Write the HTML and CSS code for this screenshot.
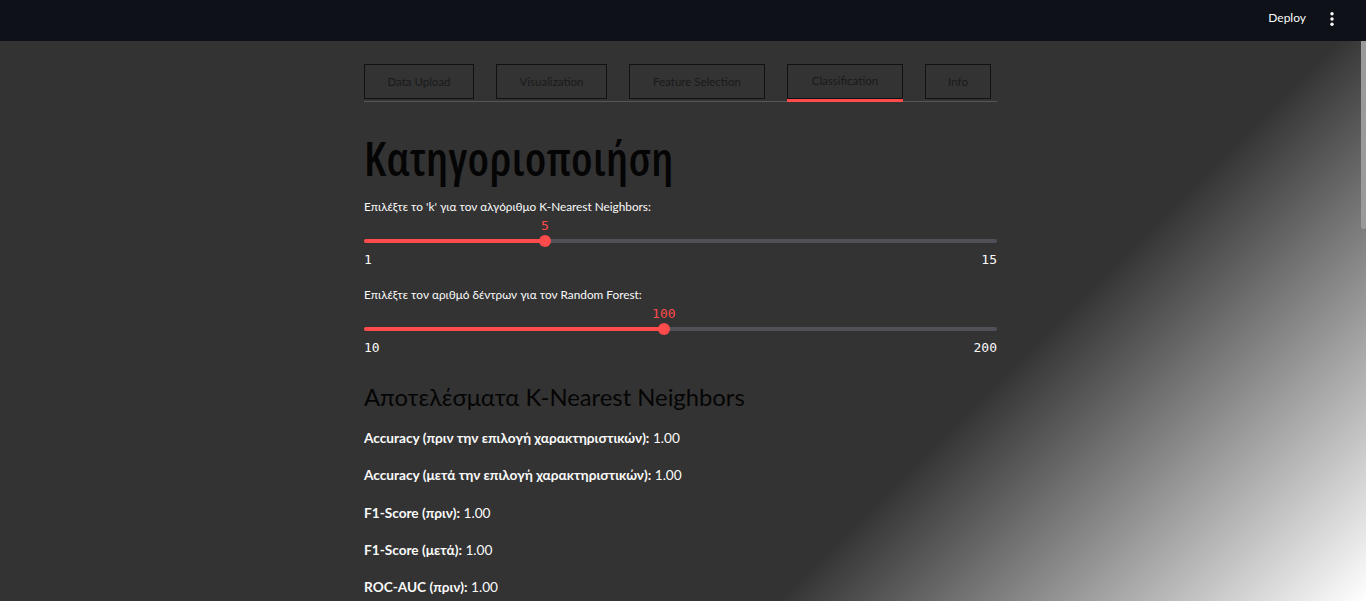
FILE: index.html
```html
<!DOCTYPE html>
<html lang="el">
<head>
<meta charset="utf-8">
<title>Classification</title>
<link rel="stylesheet" href="styles.css">
</head>
<body>
<div class="app">
  <header class="topbar">
    <span class="deploy">Deploy</span>
    <svg class="kebab" width="16" height="16" viewBox="0 0 16 16" aria-hidden="true">
      <circle cx="8" cy="3.7" r="1.7" fill="#fafafa"/>
      <circle cx="8" cy="9" r="1.7" fill="#fafafa"/>
      <circle cx="8" cy="14.3" r="1.7" fill="#fafafa"/>
    </svg>
  </header>
  <main class="main">
    <div class="block">
      <nav class="tabs">
        <div class="tab tab-upload">Data Upload</div>
        <div class="tab tab-vis">Visualization</div>
        <div class="tab tab-feat">Feature Selection</div>
        <div class="tab tab-class tab-active">Classification</div>
        <div class="tab tab-info">Info</div>
      </nav>

      <h1 class="title">Κατηγοριοποιήση</h1>

      <div class="field">
        <div class="label">Επιλέξτε το 'k' για τον αλγόριθμο K-Nearest Neighbors:</div>
        <div class="slider">
          <div class="value-row"><span class="bubble" style="left: 28.57%">5</span></div>
          <div class="track-row">
            <div class="track"><div class="fill" style="width: 28.57%"></div></div>
            <span class="thumb" style="left: 28.57%"></span>
          </div>
          <div class="ticks"><span>1</span><span>15</span></div>
        </div>
      </div>

      <div class="field">
        <div class="label">Επιλέξτε τον αριθμό δέντρων για τον Random Forest:</div>
        <div class="slider">
          <div class="value-row"><span class="bubble" style="left: 47.37%">100</span></div>
          <div class="track-row">
            <div class="track"><div class="fill" style="width: 47.37%"></div></div>
            <span class="thumb" style="left: 47.37%"></span>
          </div>
          <div class="ticks"><span>10</span><span>200</span></div>
        </div>
      </div>

      <h3 class="subtitle">Αποτελέσματα K-Nearest Neighbors</h3>

      <div class="metrics">
        <p class="metric"><b>Accuracy (πριν την επιλογή χαρακτηριστικών):</b> 1.00</p>
        <p class="metric"><b>Accuracy (μετά την επιλογή χαρακτηριστικών):</b> 1.00</p>
        <p class="metric"><b>F1-Score (πριν):</b> 1.00</p>
        <p class="metric"><b>F1-Score (μετά):</b> 1.00</p>
        <p class="metric"><b>ROC-AUC (πριν):</b> 1.00</p>
      </div>
    </div>
  </main>
  <div class="scroll-thumb"></div>
</div>
</body>
</html>
```
FILE: styles.css
```css
html, body {
  margin: 0;
  padding: 0;
  height: 100%;
  overflow: hidden;
}

body {
  font-family: "Lato", "Noto Sans", sans-serif;
  background: linear-gradient(135deg, #333333 70%, #ffffff 100%);
  color: #fafafa;
}

.app {
  position: relative;
  height: 100%;
}

/* ---------- top bar ---------- */
.topbar {
  height: 41px;
  box-sizing: border-box;
  background: #0e1117;
  display: flex;
  justify-content: flex-end;
  align-items: flex-start;
  padding: 10px 26px 0 0;
  gap: 18px;
}

.deploy {
  font-size: 12px;
  line-height: 16px;
  color: #fafafa;
}

.kebab {
  display: block;
}

/* ---------- main column ---------- */
.main {
  display: flex;
  justify-content: center;
  padding-right: 5px;
}

.block {
  width: 633px;
  padding-top: 23px;
}

/* ---------- tabs ---------- */
.tabs {
  display: flex;
  gap: 22px;
  padding-bottom: 2px;
  border-bottom: 1px solid #565656;
}

.tab {
  position: relative;
  height: 35px;
  box-sizing: border-box;
  border: 1px solid #111111;
  display: flex;
  align-items: center;
  justify-content: center;
  white-space: nowrap;
  font-size: 11.5px;
  color: #1a1a1a;
}

.tab-upload { width: 110px; }
.tab-vis    { width: 111px; }
.tab-feat   { width: 136px; }
.tab-class  { width: 116px; }
.tab-info   { width: 66px; }

.tab-active {
  padding-bottom: 2px;
}

.tab-active::after {
  content: "";
  position: absolute;
  left: -1px;
  right: -1px;
  bottom: -4px;
  height: 3px;
  background: #ff4b4b;
}

/* ---------- title ---------- */
.title {
  margin: 29px 0 0;
  font-family: "Open Sans", sans-serif;
  font-stretch: condensed;
  font-weight: 600;
  font-size: 46.5px;
  letter-spacing: 0.3px;
  line-height: 54px;
  color: #050505;
}

/* ---------- slider fields ---------- */
.field {
  margin-top: 14px;
}

.field + .field {
  margin-top: 0;
}

.label {
  font-size: 11.8px;
  line-height: 16px;
  color: #fafafa;
}

.slider {
  height: 72px;
  display: flex;
  flex-direction: column;
}

.value-row {
  position: relative;
  height: 16px;
  margin-top: 2.5px;
}

.bubble {
  position: absolute;
  top: 0;
  transform: translateX(-50%);
  font-family: "DejaVu Sans Mono", monospace;
  font-size: 13px;
  line-height: 16px;
  color: #ff4b4b;
}

.track-row {
  position: relative;
  height: 12px;
  margin-top: 1.2px;
  display: flex;
  align-items: center;
}

.track {
  width: 100%;
  height: 4px;
  border-radius: 2px;
  background: #505158;
  overflow: hidden;
}

.fill {
  height: 100%;
  background: #ff4b4b;
}

.thumb {
  position: absolute;
  top: 0;
  width: 12px;
  height: 12px;
  margin-left: -6px;
  border-radius: 50%;
  background: #ff4b4b;
}

.ticks {
  display: flex;
  justify-content: space-between;
  height: 16px;
  margin-top: 5.8px;
  font-family: "DejaVu Sans Mono", monospace;
  font-size: 13px;
  line-height: 16px;
  color: #fafafa;
}

/* ---------- results ---------- */
.subtitle {
  margin: 6.3px 0 0;
  font-weight: 400;
  font-size: 23.8px;
  line-height: 32px;
  color: #050505;
}

.metrics {
  margin-top: 14.7px;
  display: flex;
  flex-direction: column;
  gap: 17.3px;
}

.metric {
  margin: 0;
  font-size: 13.65px;
  line-height: 20px;
  color: #fafafa;
}

.metric b {
  font-weight: 700;
}

/* ---------- scrollbar thumb overlay ---------- */
.scroll-thumb {
  position: absolute;
  top: 41px;
  right: 0;
  width: 5px;
  height: 188px;
  border-radius: 0 0 2px 2px;
  background: #9a9a9a;
}
```
